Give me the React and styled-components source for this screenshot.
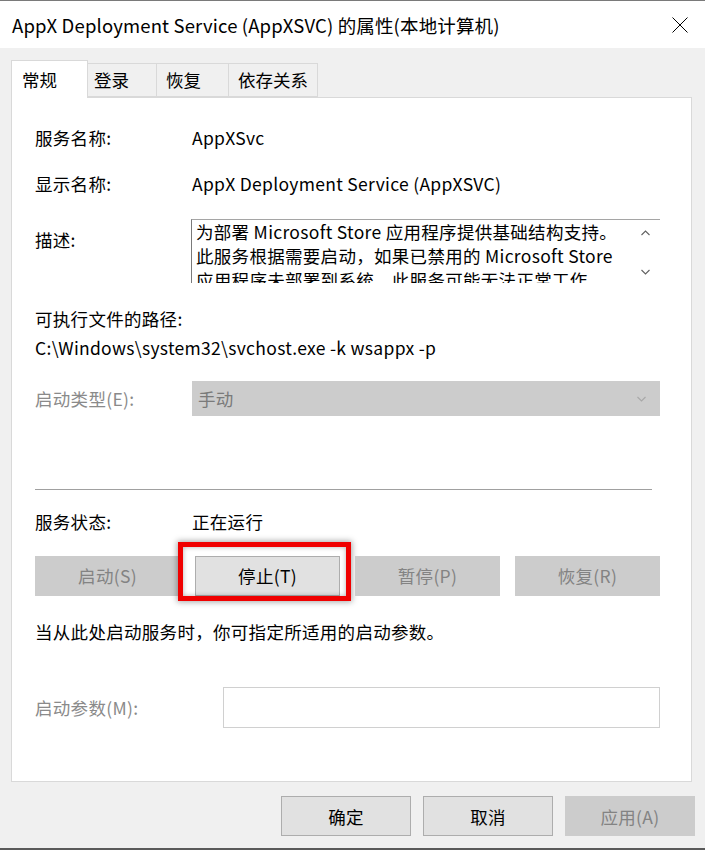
import React from "react";
import styled, { createGlobalStyle } from "styled-components";

const FONT = `"Noto Sans CJK SC", "Noto Sans", sans-serif`;

const Global = createGlobalStyle`
  html, body {
    margin: 0;
    padding: 0;
    background: #f0f0f0;
  }
  * { box-sizing: border-box; }
`;

const Window = styled.div`
  width: 705px;
  height: 850px;
  display: flex;
  flex-direction: column;
  background: #f0f0f0;
  border-top: 1px solid #7a7a7a;
  border-bottom: 2px solid #5a5a5a;
  font-family: ${FONT};
  color: #000;
  overflow: hidden;
`;

const TitleBar = styled.div`
  height: 47px;
  flex: none;
  background: #fff;
  display: flex;
  align-items: center;
  justify-content: space-between;
  padding: 0 17px 0 12px;
  font-size: 18.5px;
  letter-spacing: 0.15px;
  line-height: 24px;
  white-space: nowrap;
`;

const CloseIcon = () => (
  <svg width="16" height="16" viewBox="0 0 16 16" aria-hidden="true">
    <path d="M0.5 0.5 L15.5 15.5 M15.5 0.5 L0.5 15.5" stroke="#000" strokeWidth="1" fill="none" />
  </svg>
);

const Body = styled.div`
  flex: 1;
  display: flex;
  flex-direction: column;
  padding: 12px 10px 0 11px;
`;

const TabList = styled.div`
  display: flex;
  align-items: flex-end;
  height: 38px;
  margin-bottom: -1px;
  position: relative;
  z-index: 1;
`;

const Tab = styled.div`
  width: ${(p) => p.$w}px;
  height: ${(p) => (p.$active ? 38 : 34)}px;
  margin-bottom: ${(p) => (p.$active ? 0 : 1)}px;
  padding-left: ${(p) => p.$pl}px;
  display: flex;
  align-items: center;
  font-size: 17.5px;
  line-height: 24px;
  background: ${(p) => (p.$active ? "#fff" : "#f0f0f0")};
  border: 1px solid #d9d9d9;
  border-bottom: ${(p) => (p.$active ? "none" : "1px solid #d9d9d9")};
  border-left: ${(p) => (p.$first ? "1px solid #d9d9d9" : "none")};
`;

const Panel = styled.div`
  background: #fff;
  border: 1px solid #d9d9d9;
  margin-right: 3px;
  padding: 28px 31px 53px 23px;
  display: flex;
  flex-direction: column;
  font-size: 17.5px;
  letter-spacing: 0.3px;
  line-height: 24px;
`;

const Row = styled.div`
  display: flex;
  align-items: ${(p) => p.$align || "center"};
  margin-top: ${(p) => p.$mt || 0}px;
  white-space: nowrap;
`;

const Label = styled.div`
  width: ${(p) => p.$w || 157}px;
  flex: none;
  color: ${(p) => (p.$muted ? "#8a8a8a" : "#000")};
  margin-top: ${(p) => p.$mt || 0}px;
`;

const Value = styled.div`
  color: #000;
`;

const DescBox = styled.div`
  flex: 1;
  height: 64px;
  display: flex;
  background: #fff;
  border-top: 1px solid #a5a5a5;
  border-left: 1px solid #7a7a7a;
  overflow: hidden;
`;

const DescText = styled.div`
  flex: 1;
  min-width: 0;
  padding: 0 0 0 4px;
  line-height: 24px;
`;

const DescLine = styled.div`
  white-space: nowrap;
`;

const ScrollCol = styled.div`
  width: 30px;
  flex: none;
  display: flex;
  flex-direction: column;
  align-items: center;
  justify-content: space-between;
  padding: 10px 0 8px;
`;

const Chevron = ({ up, color = "#606060" }) => (
  <svg width="9" height="6" viewBox="0 0 9 6" aria-hidden="true">
    <path
      d={up ? "M0.5 5 L4.5 1 L8.5 5" : "M0.5 1 L4.5 5 L8.5 1"}
      stroke={color}
      strokeWidth="1.1"
      fill="none"
    />
  </svg>
);

const Combo = styled.div`
  flex: 1;
  height: 35px;
  background: #cccccc;
  display: flex;
  align-items: center;
  justify-content: space-between;
  padding: 0 14px 0 6px;
  color: #7a7a7a;
`;

const Separator = styled.div`
  height: 1px;
  margin-top: 73px;
  margin-right: 8px;
  background: #a0a0a0;
`;

const ButtonRow = styled.div`
  display: grid;
  grid-template-columns: repeat(4, 145px);
  justify-content: space-between;
  margin-top: 22px;
`;

const Button = styled.div`
  position: relative;
  height: 40px;
  width: ${(p) => p.$w || 145}px;
  display: flex;
  align-items: center;
  justify-content: center;
  font-size: 17.5px;
  letter-spacing: 0.3px;
  background: ${(p) => (p.$disabled ? "#cccccc" : "#e1e1e1")};
  border: 1px solid ${(p) => (p.$disabled ? "#cccccc" : "#adadad")};
  color: ${(p) => (p.$disabled ? "#838383" : "#000")};
`;

const Highlight = styled.div`
  position: absolute;
  left: -18px;
  right: -12px;
  top: -15px;
  bottom: -6px;
  border: 5px solid #f00000;
  box-shadow: 0 0 6px 1px rgba(0, 0, 0, 0.35), inset 0 0 5px rgba(0, 0, 0, 0.3);
  pointer-events: none;
`;

const Input = styled.div`
  flex: 1;
  height: 41px;
  background: #fff;
  border: 1px solid #d0d0d0;
`;

const Footer = styled.div`
  display: flex;
  justify-content: flex-end;
  gap: 12px;
  margin-top: 14px;
`;

export default function App() {
  return (
    <>
      <Global />
      <Window>
        <TitleBar>
          <span>AppX Deployment Service (AppXSVC) 的属性(本地计算机)</span>
          <CloseIcon />
        </TitleBar>
        <Body>
          <TabList>
            <Tab $active $first $w={77} $pl={10}>常规</Tab>
            <Tab $w={69} $pl={6}>登录</Tab>
            <Tab $w={72} $pl={9}>恢复</Tab>
            <Tab $w={89} $pl={9}>依存关系</Tab>
          </TabList>
          <Panel>
            <Row>
              <Label>服务名称:</Label>
              <Value>AppXSvc</Value>
            </Row>
            <Row $mt={22}>
              <Label>显示名称:</Label>
              <Value>AppX Deployment Service (AppXSVC)</Value>
            </Row>
            <Row $mt={23} $align="flex-start">
              <Label $mt={9} $w={156}>描述:</Label>
              <DescBox>
                <DescText>
                  <DescLine>为部署 Microsoft Store 应用程序提供基础结构支持。</DescLine>
                  <DescLine>此服务根据需要启动，如果已禁用的 Microsoft Store</DescLine>
                  <DescLine>应用程序未部署到系统，此服务可能无法正常工作。</DescLine>
                </DescText>
                <ScrollCol>
                  <Chevron up />
                  <Chevron />
                </ScrollCol>
              </DescBox>
            </Row>
            <Row $mt={24}>可执行文件的路径:</Row>
            <Row $mt={5}>C:\Windows\system32\svchost.exe -k wsappx -p</Row>
            <Row $mt={21}>
              <Label $muted>启动类型(E):</Label>
              <Combo>
                <span>手动</span>
                <Chevron color="#a8a8a8" />
              </Combo>
            </Row>
            <Separator />
            <Row $mt={20}>
              <Label>服务状态:</Label>
              <Value>正在运行</Value>
            </Row>
            <ButtonRow>
              <Button $disabled>启动(S)</Button>
              <Button>
                停止(T)
                <Highlight />
              </Button>
              <Button $disabled>暂停(P)</Button>
              <Button $disabled>恢复(R)</Button>
            </ButtonRow>
            <Row $mt={24}>当从此处启动服务时，你可指定所适用的启动参数。</Row>
            <Row $mt={43}>
              <Label $muted $w={188}>启动参数(M):</Label>
              <Input />
            </Row>
          </Panel>
          <Footer>
            <Button $w={130}>确定</Button>
            <Button $w={130}>取消</Button>
            <Button $w={130} $disabled>应用(A)</Button>
          </Footer>
        </Body>
      </Window>
    </>
  );
}
